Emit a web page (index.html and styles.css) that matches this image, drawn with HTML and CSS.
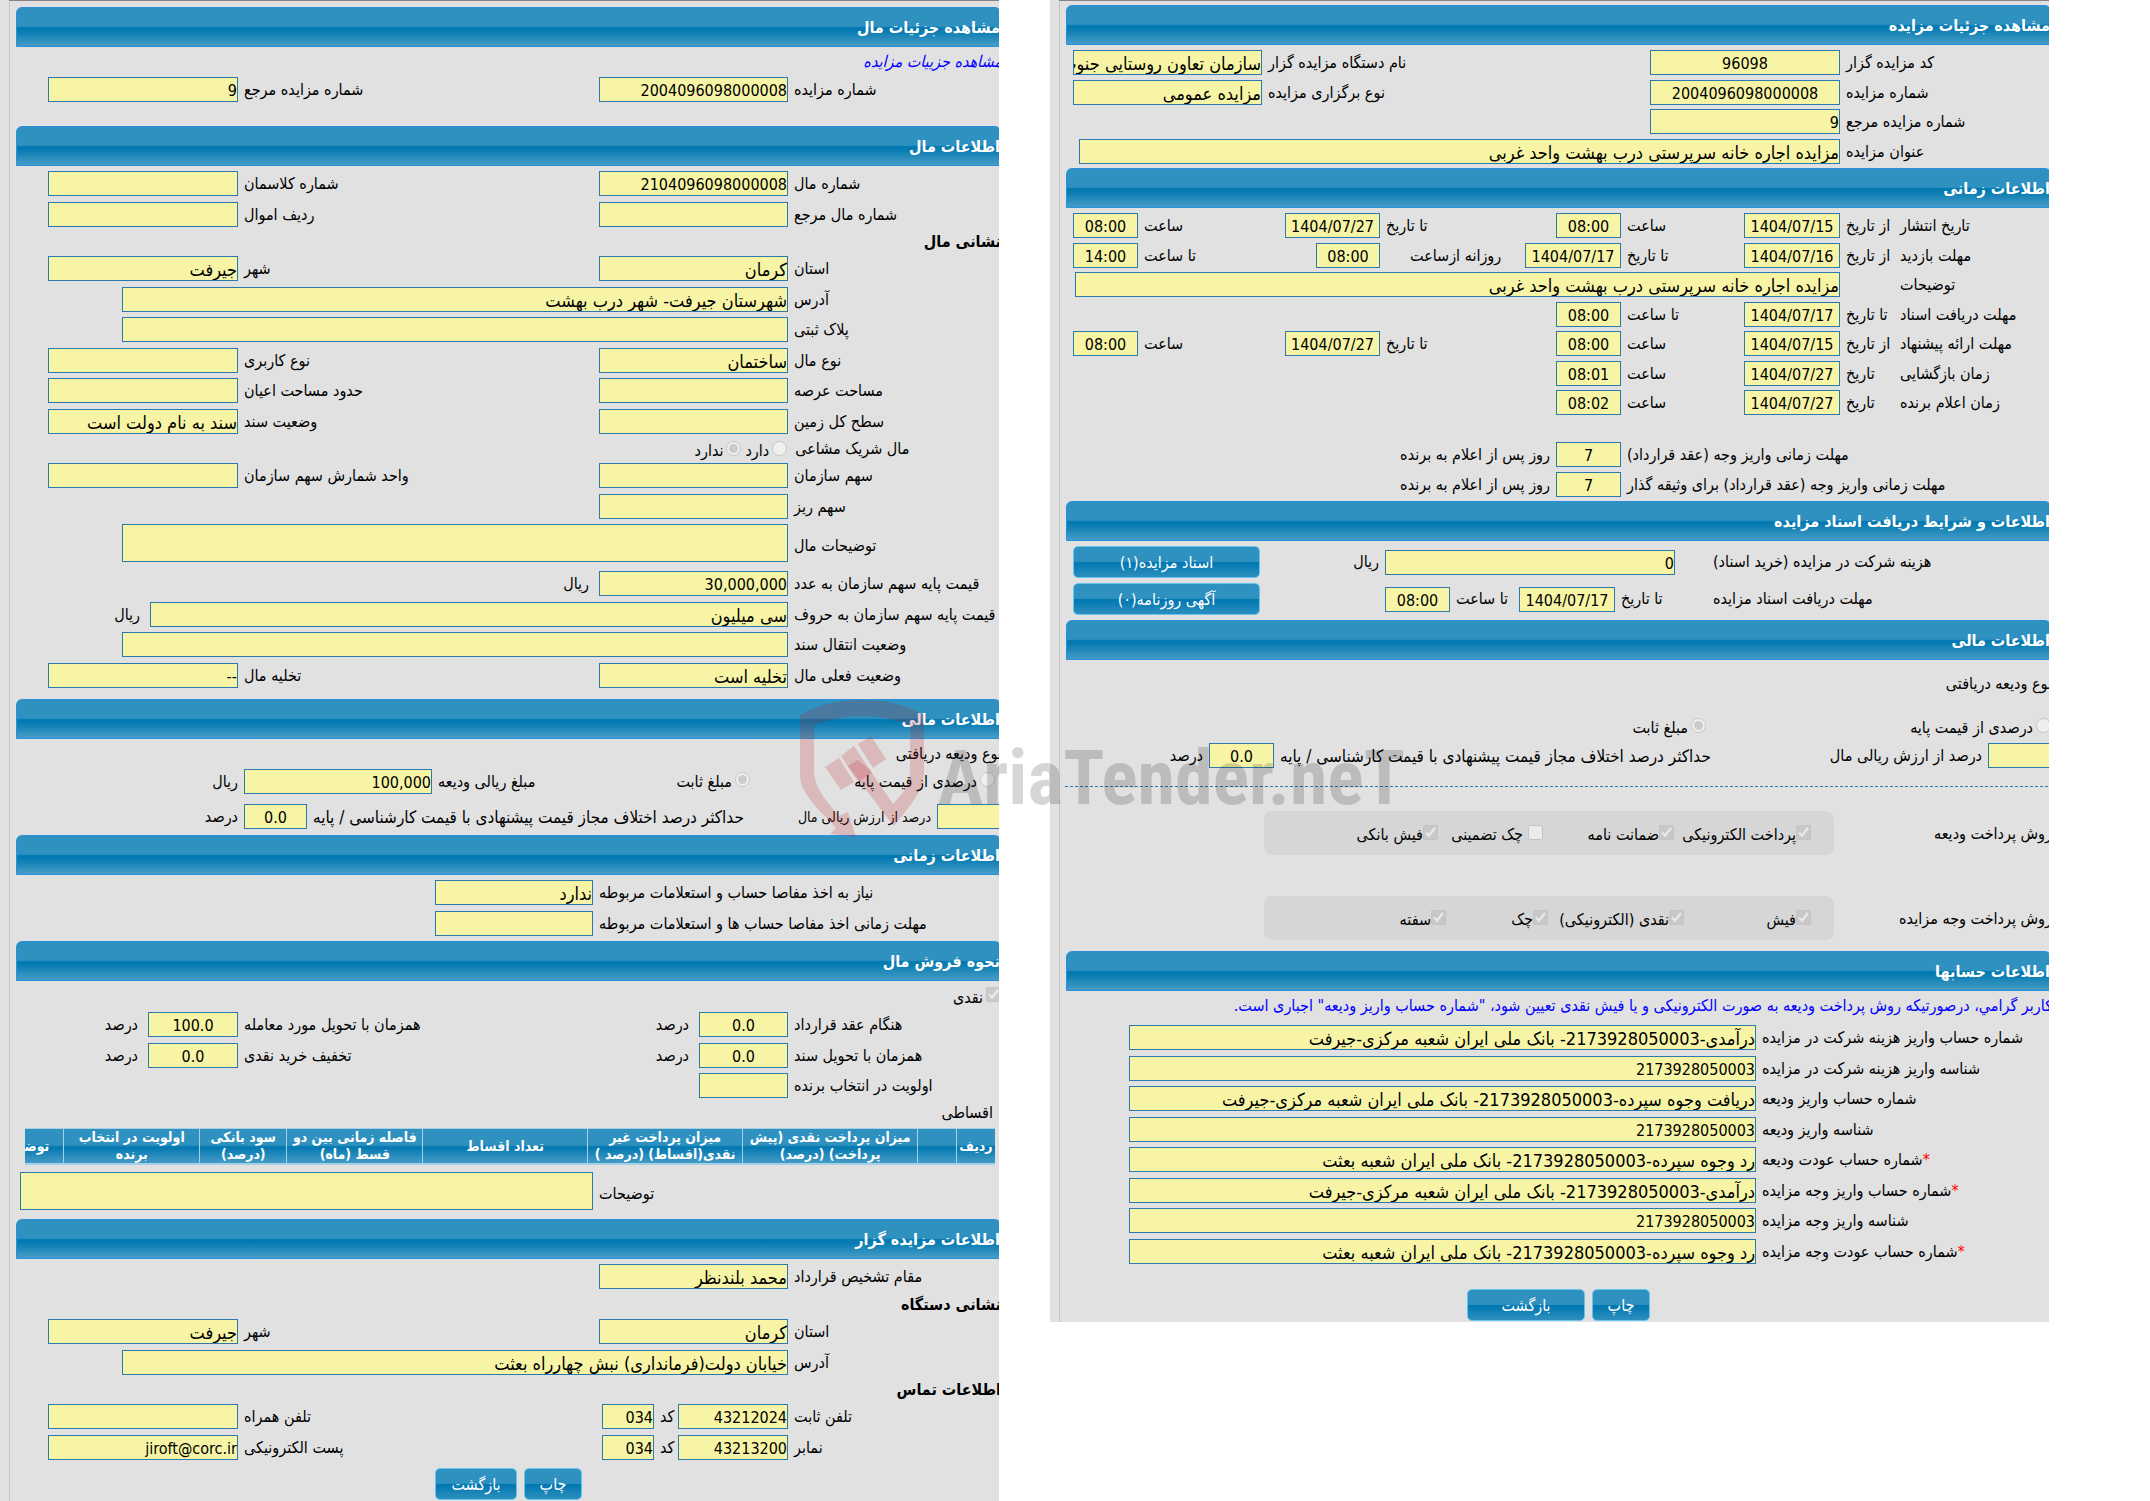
FILE: index.html
```html
<!DOCTYPE html>
<html lang="fa">
<head>
<meta charset="utf-8">
<meta name="viewport" content="width=device-width, initial-scale=1">
<title>مشاهده جزئیات مزایده</title>
<link rel="stylesheet" href="styles.css">
</head>
<body>
<main class="page">

<article class="panel" dir="rtl">
  <h1 class="bar">مشاهده جزئیات مال</h1>
  <div class="line line-link"><a class="detail-link" href="#auction">مشاهده جزییات مزایده</a></div>
  <div class="rows">
    <div class="row two">
      <label for="a1">شماره مزایده</label><input id="a1" readonly value="2004096098000008">
      <label for="a2">شماره مزایده مرجع</label><input id="a2" readonly value="9">
    </div>
  </div>

  <h2 class="bar spaced">اطلاعات مال</h2>
  <div class="rows">
    <div class="row two">
      <label for="b1">شماره مال</label><input id="b1" readonly value="2104096098000008">
      <label for="b2">شماره کلاسمان</label><input id="b2" readonly>
    </div>
    <div class="row two">
      <label for="b3">شماره مال مرجع</label><input id="b3" readonly>
      <label for="b4">ردیف اموال</label><input id="b4" readonly>
    </div>
  </div>
  <h3 class="sub">نشانی مال</h3>
  <div class="rows">
    <div class="row two">
      <label for="c1">استان</label><input class="fa" id="c1" readonly value="کرمان">
      <label for="c2">شهر</label><input class="fa" id="c2" readonly value="جیرفت">
    </div>
    <div class="row wide">
      <label for="c3">آدرس</label><input class="fa" id="c3" readonly value="شهرستان جیرفت- شهر درب بهشت">
    </div>
    <div class="row wide">
      <label for="c4">پلاک ثبتی</label><input id="c4" readonly>
    </div>
    <div class="row two">
      <label for="c5">نوع مال</label><input class="fa" id="c5" readonly value="ساختمان">
      <label for="c6">نوع کاربری</label><input id="c6" readonly>
    </div>
    <div class="row two">
      <label for="c7">مساحت عرصه</label><input id="c7" readonly>
      <label for="c8">حدود مساحت اعیان</label><input id="c8" readonly>
    </div>
    <div class="row two">
      <label for="c9">سطح کل زمین</label><input id="c9" readonly>
      <label for="c10">وضعیت سند</label><input class="fa" id="c10" readonly value="سند به نام دولت است">
    </div>
  </div>
  <div class="line line-share">
    <span class="lead" id="share">مال شریک مشاعی</span>
    <div class="options" role="radiogroup" aria-labelledby="share">
      <label class="opt"><input type="radio" name="share" disabled>دارد</label>
      <label class="opt"><input type="radio" name="share" disabled checked>ندارد</label>
    </div>
  </div>
  <div class="rows">
    <div class="row two">
      <label for="d1">سهم سازمان</label><input id="d1" readonly>
      <label for="d2">واحد شمارش سهم سازمان</label><input id="d2" readonly>
    </div>
    <div class="row two">
      <label for="d3">سهم ریز</label><input id="d3" readonly>
    </div>
  </div>
  <div class="row wide area">
    <label for="d4">توضیحات مال</label><textarea id="d4" readonly></textarea>
  </div>
  <div class="rows">
    <div class="row two">
      <label for="e1">قیمت پایه سهم سازمان به عدد</label><input id="e1" readonly value="30,000,000">
      <span class="unit">ریال</span>
    </div>
    <div class="row words">
      <label for="e2">قیمت پایه سهم سازمان به حروف</label><input class="fa" id="e2" readonly value="سی میلیون">
      <span class="unit">ریال</span>
    </div>
    <div class="row wide">
      <label for="e3">وضعیت انتقال سند</label><input id="e3" readonly>
    </div>
    <div class="row two">
      <label for="e4">وضعیت فعلی مال</label><input class="fa" id="e4" readonly value="تخلیه است">
      <label for="e5">تخلیه مال</label><input id="e5" readonly value="--">
    </div>
  </div>

  <h2 class="bar spaced-sm">اطلاعات مالی</h2>
  <div class="line line-link flush">نوع ودیعه دریافتی</div>
  <div class="row deposit">
    <label class="opt"><input type="radio" name="dep" disabled>درصدی از قیمت پایه</label>
    <label class="opt"><input type="radio" name="dep" disabled checked>مبلغ ثابت</label>
    <label for="f1">مبلغ ریالی ودیعه</label><input id="f1" readonly value="100,000">
    <span class="unit near">ریال</span>
  </div>
  <div class="row percent">
    <input class="cut" id="f2" readonly><label class="unit near small" for="f2">درصد از ارزش ریالی مال</label>
    <label class="limit" for="f3">حداکثر درصد اختلاف مجاز قیمت پیشنهادی با قیمت کارشناسی / پایه</label><input class="mid" id="f3" readonly value="0.0">
    <span class="unit near">درصد</span>
  </div>

  <h2 class="bar">اطلاعات زمانی</h2>
  <div class="rows">
    <div class="row clearance">
      <label for="g1">نیاز به اخذ مفاصا حساب و استعلامات مربوطه</label><input class="fa" id="g1" readonly value="ندارد">
    </div>
    <div class="row clearance">
      <label for="g2">مهلت زمانی اخذ مفاصا حساب ها و استعلامات مربوطه</label><input id="g2" readonly>
    </div>
  </div>

  <h2 class="bar">نحوه فروش مال</h2>
  <div class="line line-cash">
    <label class="opt"><input type="checkbox" disabled checked>نقدی</label>
  </div>
  <div class="rows">
    <div class="row sale">
      <label for="h1">هنگام عقد قرارداد</label><input class="mid" id="h1" readonly value="0.0"><span class="unit">درصد</span>
      <label for="h2">همزمان با تحویل مورد معامله</label><input class="mid" id="h2" readonly value="100.0"><span class="unit">درصد</span>
    </div>
    <div class="row sale">
      <label for="h3">همزمان با تحویل سند</label><input class="mid" id="h3" readonly value="0.0"><span class="unit">درصد</span>
      <label for="h4">تخفیف خرید نقدی</label><input class="mid" id="h4" readonly value="0.0"><span class="unit">درصد</span>
    </div>
    <div class="row sale">
      <label for="h5">اولویت در انتخاب برنده</label><input id="h5" readonly>
    </div>
  </div>
  <div class="line line-table">اقساطی</div>
  <div class="table-box">
    <table class="plan">
      <colgroup><col class="w1"><col class="w1"><col class="w6"><col class="w4"><col class="w5"><col class="w3"><col class="w2"><col class="w3"><col class="w1"></colgroup>
      <thead><tr>
        <th>ردیف</th><th></th><th>میزان پرداخت نقدی (پیش پرداخت) (درصد)</th><th>میزان پرداخت غیر نقدی(اقساط) (درصد )</th><th>تعداد اقساط</th><th>فاصله زمانی بین دو قسط (ماه)</th><th>سود بانکی (درصد)</th><th class="narrow">اولویت در انتخاب برنده</th><th class="clip">توضیحات</th>
      </tr></thead>
    </table>
  </div>
  <div class="row notes area">
    <label for="i1">توضیحات</label><textarea id="i1" readonly></textarea>
  </div>

  <h2 class="bar">اطلاعات مزایده گزار</h2>
  <div class="rows">
    <div class="row two">
      <label for="j1">مقام تشخیص قرارداد</label><input class="fa" id="j1" readonly value="محمد بلندنظر">
    </div>
  </div>
  <h3 class="sub">نشانی دستگاه</h3>
  <div class="rows">
    <div class="row two">
      <label for="k1">استان</label><input class="fa" id="k1" readonly value="کرمان">
      <label for="k2">شهر</label><input class="fa" id="k2" readonly value="جیرفت">
    </div>
    <div class="row wide">
      <label for="k3">آدرس</label><input class="fa" id="k3" readonly value="خیابان دولت(فرمانداری) نبش چهارراه بعثت">
    </div>
  </div>
  <h3 class="sub">اطلاعات تماس</h3>
  <div class="rows">
    <div class="row phone">
      <label for="l1">تلفن ثابت</label><input id="l1" readonly value="43212024">
      <label for="l2">کد</label><input id="l2" readonly value="034">
      <label for="l3">تلفن همراه</label><input id="l3" readonly>
    </div>
    <div class="row phone">
      <label for="l4">نمابر</label><input id="l4" readonly value="43213200">
      <label for="l5">کد</label><input id="l5" readonly value="034">
      <label for="l6">پست الکترونیکی</label><input id="l6" readonly value="jiroft@corc.ir">
    </div>
  </div>
  <div class="actions actions-asset">
    <button class="btn print" type="button">چاپ</button>
    <button class="btn back" type="button">بازگشت</button>
  </div>
</article>

<article class="panel compact" id="auction" dir="rtl">
  <h1 class="bar">مشاهده جزئیات مزایده</h1>
  <div class="rows">
    <div class="row head">
      <label for="m1">کد مزایده گزار</label><input class="mid" id="m1" readonly value="96098">
      <label for="m2">نام دستگاه مزایده گزار</label><input class="fa" id="m2" readonly value="سازمان تعاون روستایی جنوب کرمان">
    </div>
    <div class="row head">
      <label for="m3">شماره مزایده</label><input class="mid" id="m3" readonly value="2004096098000008">
      <label for="m4">نوع برگزاری مزایده</label><input class="fa" id="m4" readonly value="مزایده عمومی">
    </div>
    <div class="row head">
      <label for="m5">شماره مزایده مرجع</label><input id="m5" readonly value="9">
    </div>
    <div class="row title">
      <label for="m6">عنوان مزایده</label><input class="fa" id="m6" readonly value="مزایده اجاره خانه سرپرستی درب بهشت واحد غربی">
    </div>
  </div>

  <h2 class="bar">اطلاعات زمانی</h2>
  <div class="rows">
    <div class="row times">
      <span class="name">تاریخ انتشار</span>
      <label for="n1">از تاریخ</label><input class="mid" id="n1" readonly value="1404/07/15">
      <label for="n2">ساعت</label><input class="mid" id="n2" readonly value="08:00">
      <label for="n3">تا تاریخ</label><input class="mid" id="n3" readonly value="1404/07/27">
      <label for="n4">ساعت</label><input class="mid" id="n4" readonly value="08:00">
    </div>
    <div class="row times visit">
      <span class="name">مهلت بازدید</span>
      <label for="n5">از تاریخ</label><input class="mid" id="n5" readonly value="1404/07/16">
      <label for="n6">تا تاریخ</label><input class="mid" id="n6" readonly value="1404/07/17">
      <label class="daily" for="n7">روزانه ازساعت</label><input class="mid" id="n7" readonly value="08:00">
      <label for="n8">تا ساعت</label><input class="mid" id="n8" readonly value="14:00">
    </div>
    <div class="row remark">
      <label class="name" for="n9">توضیحات</label><input class="fa" id="n9" readonly value="مزایده اجاره خانه سرپرستی درب بهشت واحد غربی">
    </div>
    <div class="row times">
      <span class="name">مهلت دریافت اسناد</span>
      <label for="n10">تا تاریخ</label><input class="mid" id="n10" readonly value="1404/07/17">
      <label for="n11">تا ساعت</label><input class="mid" id="n11" readonly value="08:00">
    </div>
    <div class="row times">
      <span class="name">مهلت ارائه پیشنهاد</span>
      <label for="n12">از تاریخ</label><input class="mid" id="n12" readonly value="1404/07/15">
      <label for="n13">ساعت</label><input class="mid" id="n13" readonly value="08:00">
      <label for="n14">تا تاریخ</label><input class="mid" id="n14" readonly value="1404/07/27">
      <label for="n15">ساعت</label><input class="mid" id="n15" readonly value="08:00">
    </div>
    <div class="row times">
      <span class="name">زمان بازگشایی</span>
      <label for="n16">تاریخ</label><input class="mid" id="n16" readonly value="1404/07/27">
      <label for="n17">ساعت</label><input class="mid" id="n17" readonly value="08:01">
    </div>
    <div class="row times">
      <span class="name">زمان اعلام برنده</span>
      <label for="n18">تاریخ</label><input class="mid" id="n18" readonly value="1404/07/27">
      <label for="n19">ساعت</label><input class="mid" id="n19" readonly value="08:02">
    </div>
  </div>
  <div class="rows apart">
    <div class="row payday">
      <label for="o1">مهلت زمانی واریز وجه (عقد قرارداد)</label><input class="mid" id="o1" readonly value="7">
      <span class="unit near">روز پس از اعلام به برنده</span>
    </div>
    <div class="row payday">
      <label for="o2">مهلت زمانی واریز وجه (عقد قرارداد) برای وثیقه گذار</label><input class="mid" id="o2" readonly value="7">
      <span class="unit near">روز پس از اعلام به برنده</span>
    </div>
  </div>

  <h2 class="bar">اطلاعات و شرایط دریافت اسناد مزایده</h2>
  <div class="docs-block">
    <div class="docs fee">
      <label class="name" for="p1">هزینه شرکت در مزایده (خرید اسناد)</label><input id="p1" readonly value="0">
      <span class="unit near">ریال</span>
      <button class="btn" type="button">اسناد مزایده(۱)</button>
    </div>
    <div class="docs until">
      <span class="name">مهلت دریافت اسناد مزایده</span>
      <label for="p2">تا تاریخ</label><input class="mid" id="p2" readonly value="1404/07/17">
      <label for="p3">تا ساعت</label><input class="mid" id="p3" readonly value="08:00">
      <button class="btn" type="button">آگهی روزنامه(۰)</button>
    </div>
  </div>

  <h2 class="bar">اطلاعات مالی</h2>
  <div class="line line-kind flush">نوع ودیعه دریافتی</div>
  <div class="line line-basis">
    <label class="opt"><input type="radio" name="basis" disabled>درصدی از قیمت پایه</label>
    <label class="opt"><input type="radio" name="basis" disabled checked>مبلغ ثابت</label>
  </div>
  <div class="row share">
    <input class="cut" id="q1" readonly><label class="unit near" for="q1">درصد از ارزش ریالی مال</label>
    <label class="limit" for="q2">حداکثر درصد اختلاف مجاز قیمت پیشنهادی با قیمت کارشناسی / پایه</label><input class="mid" id="q2" readonly value="0.0">
    <span class="unit near">درصد</span>
  </div>
  <hr class="dash">
  <div class="methods">
    <span class="flush" id="pay1">روش پرداخت ودیعه</span>
    <div class="box deposit-ways" role="group" aria-labelledby="pay1">
      <label class="opt"><input type="checkbox" disabled checked>پرداخت الکترونیکی</label>
      <label class="opt"><input type="checkbox" disabled checked>ضمانت نامه</label>
      <label class="opt loose"><input type="checkbox" disabled>چک تضمینی</label>
      <label class="opt"><input type="checkbox" disabled checked>فیش بانکی</label>
    </div>
    <span class="flush" id="pay2">روش پرداخت وجه مزایده</span>
    <div class="box price-ways" role="group" aria-labelledby="pay2">
      <label class="opt"><input type="checkbox" disabled checked>فیش</label>
      <label class="opt"><input type="checkbox" disabled checked>نقدی (الکترونیکی)</label>
      <label class="opt"><input type="checkbox" disabled checked>چک</label>
      <label class="opt"><input type="checkbox" disabled checked>سفته</label>
    </div>
  </div>

  <h2 class="bar">اطلاعات حسابها</h2>
  <p class="hint flush">کاربر گرامي، درصورتیکه روش پرداخت ودیعه به صورت الکترونیکی و یا فیش نقدی تعیین شود، "شماره حساب واریز ودیعه" اجباری است.</p>
  <div class="rows accounts">
    <div class="row account"><label for="r1">شماره حساب واریز هزینه شرکت در مزایده</label><input class="fa" id="r1" readonly value="درآمدی-2173928050003- بانک ملی ایران شعبه مرکزی-جیرفت"></div>
    <div class="row account"><label for="r2">شناسه واریز هزینه شرکت در مزایده</label><input id="r2" readonly value="2173928050003"></div>
    <div class="row account"><label for="r3">شماره حساب واریز ودیعه</label><input class="fa" id="r3" readonly value="دریافت وجوه سپرده-2173928050003- بانک ملی ایران شعبه مرکزی-جیرفت"></div>
    <div class="row account"><label for="r4">شناسه واریز ودیعه</label><input id="r4" readonly value="2173928050003"></div>
    <div class="row account"><label for="r5"><b class="req">*</b>شماره حساب عودت ودیعه</label><input class="fa" id="r5" readonly value="رد وجوه سپرده-2173928050003- بانک ملی ایران شعبه بعثت"></div>
    <div class="row account"><label for="r6"><b class="req">*</b>شماره حساب واریز وجه مزایده</label><input class="fa" id="r6" readonly value="درآمدی-2173928050003- بانک ملی ایران شعبه مرکزی-جیرفت"></div>
    <div class="row account"><label for="r7">شناسه واریز وجه مزایده</label><input id="r7" readonly value="2173928050003"></div>
    <div class="row account"><label for="r8"><b class="req">*</b>شماره حساب عودت وجه مزایده</label><input class="fa" id="r8" readonly value="رد وجوه سپرده-2173928050003- بانک ملی ایران شعبه بعثت"></div>
  </div>
  <div class="actions actions-auction">
    <button class="btn print" type="button">چاپ</button>
    <button class="btn back" type="button">بازگشت</button>
  </div>
</article>

<div class="watermark" aria-hidden="true">
  <svg class="shield" viewBox="0 0 126 142" width="126" height="142">
    <path fill-rule="evenodd" d="M0 19Q25 4 62 4T124 19V78C122 98 108 112 94 130L89 124L48 70L58 64L70 74L93 108C103 98 110 88 110 76V30Q90 20 62 20T14 30V74C14 92 26 104 39 120L48 116L56 141L30 138L36 132C18 112 0 98 0 78Z"/>
    <path d="M25 71L39 62L54 86L41 94ZM41 60L54 50L72 77L58 86ZM58 48L71 40L86 63L73 72Z"/>
  </svg>
  <span class="brand">AriaTender.neT</span>
</div>
</main>
</body>
</html>
```

FILE: styles.css
```css
* { box-sizing: border-box; }

body {
  margin: 0;
  background: #fff;
  color: #000;
  font-family: "DejaVu Sans Condensed", "DejaVu Sans", Tahoma, sans-serif;
  font-size: 16px;
}

.page {
  position: relative;
  display: grid;
  grid-template-columns: minmax(0, 1fr) minmax(0, 1fr);
  gap: 51px;
  align-items: start;
  padding-right: 101px;
}

.panel {
  overflow: hidden;
  padding: 7px 0 1px;
  background:
    linear-gradient(#868286, #868286) 9px 0 / 100% 1px no-repeat,
    linear-gradient(#c6c6c6, #c6c6c6) 9px 0 / 1px 100% no-repeat,
    #e1e1e1;
}
.compact { padding-top: 5px; }

/* Section bars */
.bar {
  height: 40px;
  margin: 0 -2px 0 16px;
  border: 1px solid #2a8fdd;
  border-radius: 6px 6px 0 0;
  background: linear-gradient(#2e91c0 0 48%, #0077b0 52%, #0a7db3 62%, #479cc5);
  color: #fff;
  font-size: 16px;
  font-weight: bold;
  line-height: 39px;
}
.spaced { margin-top: 18px; }
.spaced-sm { margin-top: 6px; }
.sub {
  height: 24px;
  margin: 0 -2px 0 0;
  font-size: 16px;
  line-height: 20px;
}
.flush { margin-right: -3px; }

/* Rows */
.row { display: grid; height: 31px; align-items: start; }
.rows > .row:nth-child(even) { height: 30px; }
.compact .rows > .row { height: 30px; }
.compact .rows > .row:nth-child(even) { height: 29px; }
.compact .accounts > .row:nth-child(odd) { height: 31px; }
.compact .accounts > .row:nth-child(even) { height: 30px; }
.bar + .rows { margin-top: 5px; }
.apart { margin-top: 22px; }

label, .unit, .name { line-height: 26px; white-space: nowrap; }
.row > *, .docs > * { min-width: 0; }
.row > label, .docs > label { display: flex; justify-content: flex-end; padding-left: 6px; }
.row > .unit { display: block; padding: 0 10px 0 0; text-align: right; }
.row > .near, .docs > .near { padding-right: 6px; }
.row > .name, .docs > .name { display: flex; justify-content: flex-end; padding-left: 0; }
.row > .daily { padding-left: 30px; }
.row > .limit { font-size: 17px; }
.row > .small { font-size: 14px; }

.two { grid-template-columns: 211fr 189fr 361fr 190fr 48fr; }
.wide { grid-template-columns: 211fr 666fr 122fr; }
.words { grid-template-columns: 211fr 638fr 150fr; }
.deposit { grid-template-columns: 249fr 126fr 192fr 188fr 244fr; }
.percent { grid-template-columns: 62fr 196fr 434fr 63fr 244fr; }
.clearance { grid-template-columns: 406fr 158fr 435fr; }
.sale { grid-template-columns: 211fr 89fr 160fr 301fr 90fr 148fr; }
.notes { grid-template-columns: 406fr 573fr 20fr; }
.phone { grid-template-columns: 211fr 110fr 24fr 52fr 364fr 190fr 48fr; }
.head { grid-template-columns: 209fr 190fr 388fr 189fr 23fr; }
.title { grid-template-columns: 209fr 761fr 29fr; }
.times { grid-template-columns: 149fr 60fr 96fr 123fr 65fr 176fr 95fr 147fr 65fr 23fr; }
.visit { grid-template-columns: 149fr 60fr 96fr 123fr 96fr 145fr 64fr 178fr 65fr 23fr; }
.remark { grid-template-columns: 149fr 60fr 765fr 25fr; }
.remark > input { grid-column: 3; }
.payday { grid-template-columns: 428fr 65fr 506fr; }
.share { grid-template-columns: 61fr 281fr 433fr 65fr 159fr; }
.account { grid-template-columns: 293fr 627fr 79fr; }

/* Fields */
input:not([type]), textarea {
  display: block;
  width: 100%;
  height: 25px;
  margin: 0;
  padding: 2px 0 0;
  border: 1px solid #2a7aae;
  border-radius: 0;
  outline: 0;
  background: #f7f5a5;
  color: #000;
  font: 16px "DejaVu Sans Condensed", "DejaVu Sans", Tahoma, sans-serif;
  resize: none;
}
input.fa { font-size: 18px; }
.area { height: 47px; }
.area textarea { height: 38px; }
.area label { line-height: 44px; }
.mid { text-align: center; }
.row > .cut { border-right: 0; }

/* Single text lines and options */
.line { display: flex; line-height: 28px; }
.line-link { height: 30px; line-height: 30px; }
.detail-link { margin-right: -3px; color: #00f; font-style: italic; text-decoration: none; }
.line-share { height: 24px; line-height: 20px; }
.lead { width: 21%; padding-left: 6px; text-align: left; }
.options { display: flex; gap: 4px; padding-right: 2px; }
.opt { display: flex; align-items: center; gap: 3px; line-height: 22px; white-space: nowrap; }
.opt input { flex: none; width: 15px; height: 15px; margin: 0 0 6px; }
.row > .opt { justify-content: flex-start; padding: 2px 0 0; }
.deposit { height: 35px; }
.deposit > .opt:first-child { padding-right: 4px; }
.line-cash { height: 31px; }
.line-cash .opt { margin-right: -2px; padding-top: 2px; }
.line-table { height: 24px; padding-right: 6px; line-height: 18px; }
.line-kind { height: 50px; line-height: 48px; }
.line-basis { height: 33px; margin-right: -2px; padding-top: 3px; }
.line-basis .opt { flex-basis: 345px; }

/* Instalment table */
.table-box { margin: 0 4px 7px 25px; }
.plan {
  width: 100%;
  height: 37px;
  border-collapse: collapse;
  table-layout: fixed;
  border-top: 1px solid #a6d0e8;
  border-bottom: 2px solid #a6d0e8;
  background: linear-gradient(#2e91c0 0 48%, #0077b0 52%, #479cc5);
}
.plan th {
  overflow: hidden;
  padding: 0;
  border-left: 1px solid #a6d0e8;
  color: #fff;
  font-size: 14px;
  line-height: 17px;
}
.plan th:last-child { border-left: 0; }
.plan .narrow { padding: 0 10px; }
.plan .clip { padding-right: 14px; text-align: right; }
.w1 { width: 4%; }
.w2 { width: 9%; }
.w3 { width: 14%; }
.w4 { width: 16%; }
.w5 { width: 17%; }
.w6 { width: 18%; }

/* Buttons */
.btn {
  height: 32px;
  padding: 0;
  border: 1px solid #62c6ee;
  border-radius: 5px;
  background: linear-gradient(#2e91c0 0 48%, #0077b0 52%, #2e8fbf);
  color: #fff;
  font: 16px "DejaVu Sans Condensed", "DejaVu Sans", Tahoma, sans-serif;
}
.actions { display: flex; gap: 7px; }
.actions-asset { margin-top: 3px; padding-right: 417px; }
.actions-auction { margin-top: 20px; padding-right: 399px; }
.print { width: 58px; }
.back { width: 82px; }
.actions-auction .back { width: 118px; }

/* Auction documents */
.docs-block { display: grid; gap: 5px; margin: 5px 0; }
.docs { display: grid; align-items: center; }
.fee { grid-template-columns: 336fr 38fr 290fr 125fr 187fr 23fr; }
.fee input { grid-column: 3; }
.until { grid-template-columns: 336fr 98fr 96fr 69fr 65fr 125fr 187fr 23fr; }
.until .btn { grid-column: 7; }

.dash { height: 0; margin: 12px -4px 0 15px; border: 0; border-top: 1px dashed #2a7aae; }
.methods {
  display: grid;
  grid-template-columns: 215fr 570fr 214fr;
  row-gap: 41px;
  align-items: center;
  margin: 24px 0 11px;
  white-space: nowrap;
}
.methods > span { grid-column: 1; }
.box {
  display: grid;
  height: 44px;
  padding-right: 23px;
  border-radius: 8px;
  background: #d6d6d6;
}
.box .opt { padding-top: 4px; gap: 0; }
.box .loose { gap: 5px; }
.deposit-ways { grid-template-columns: 137fr 131fr 105fr 174fr; }
.price-ways { grid-template-columns: 127fr 136fr 102fr 182fr; }
.hint { height: 34px; margin-top: 0; margin-bottom: 0; color: #00f; line-height: 30px; white-space: nowrap; }
.req { color: #f00; font-weight: normal; }

/* Site mark laid over both panels */
.watermark {
  position: absolute;
  top: 696px;
  left: 37.2%;
  display: flex;
  align-items: flex-start;
  gap: 12px;
  pointer-events: none;
}
.shield { flex: none; fill: rgba(190, 25, 35, .2); }
.brand {
  color: rgba(0, 0, 0, .16);
  font: bold 76px/164px "Roboto Condensed", "Open Sans Condensed", "Lato", sans-serif;
}
```
